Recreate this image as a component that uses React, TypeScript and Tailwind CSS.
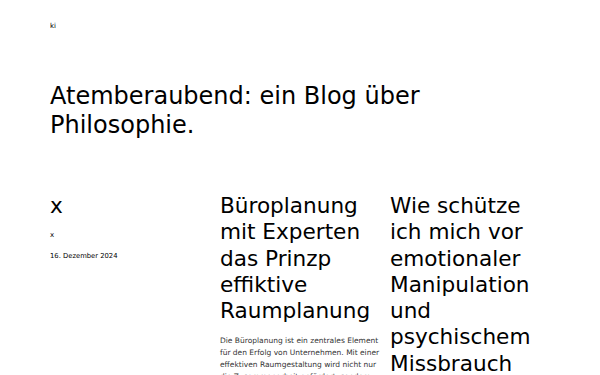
export default function App() {
  const font = { fontFamily: '"DejaVu Sans", sans-serif' };
  return (
    <div className="h-screen overflow-hidden bg-white text-black px-[50px]" style={font}>
      <header className="pt-[21px]">
        <p className="text-[7px] leading-[10px]">ki</p>
      </header>
      <h1 className="mt-[51px] text-[24px] leading-[29px] font-normal">
        Atemberaubend: ein Blog über Philosophie.
      </h1>
      <div className="mt-[53px] grid grid-cols-3 gap-[10px] w-[500px]">
        <article>
          <h2 className="text-[21.6px] leading-[26.3px]">x</h2>
          <p className="mt-[11px] text-[7px] leading-[10px]">x</p>
          <p className="mt-[11px] text-[6.8px] leading-[10px]">16. Dezember 2024</p>
        </article>
        <article>
          <h2 className="text-[21.6px] leading-[26.3px]">
            Büroplanung mit Experten das Prinzp effiktive Raumplanung
          </h2>
          <p className="mt-[11px] text-[7.5px] leading-[12px] text-[#333]">
            Die Büroplanung ist ein zentrales Element für den Erfolg von Unternehmen. Mit einer
            effektiven Raumgestaltung wird nicht nur die Zusammenarbeit gefördert, sondern auch
            die Produktivität gesteigert.
          </p>
        </article>
        <article>
          <h2 className="text-[21.6px] leading-[26.3px]">
            Wie schütze ich mich vor emotionaler Manipulation und psychischem Missbrauch
          </h2>
        </article>
      </div>
    </div>
  );
}
